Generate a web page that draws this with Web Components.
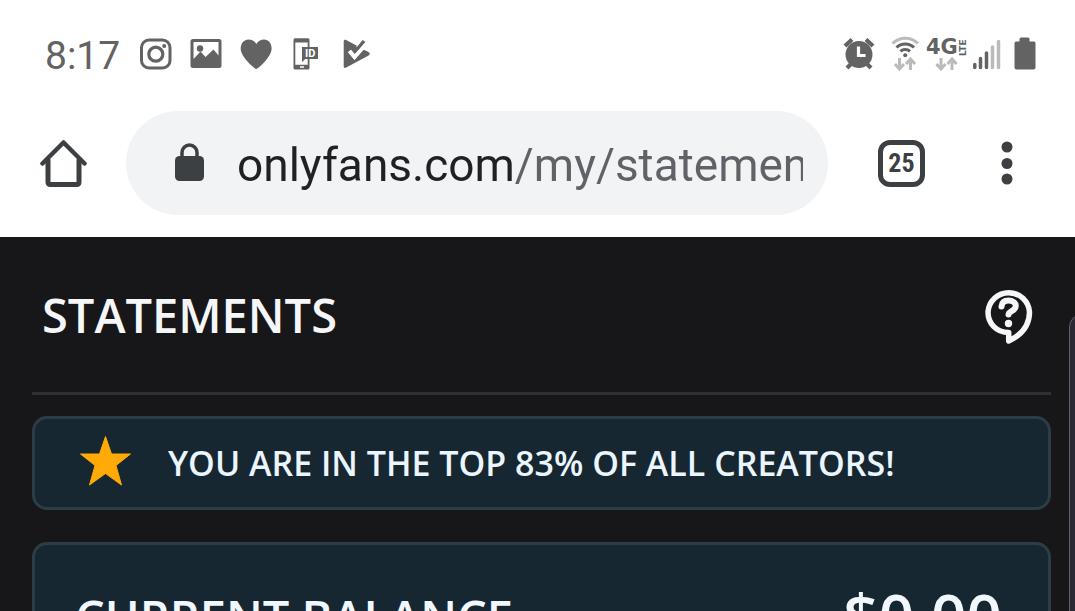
<!DOCTYPE html>
<html lang="en">
<head>
<meta charset="utf-8">
<meta name="viewport" content="width=device-width, initial-scale=1">
<title>Statements</title>
<style>
  html, body { margin: 0; height: 100%; background: #17171a; overflow: hidden; }
  body { font-family: Roboto, "Noto Sans", sans-serif; }
</style>
</head>
<body>
<phone-screen>
  <status-bar slot="chrome">8:17</status-bar>
  <browser-bar slot="chrome" url="onlyfans.com/my/statements" tabs="25"></browser-bar>
  <page-header>STATEMENTS</page-header>
  <rank-banner>YOU ARE IN THE TOP 83% OF ALL CREATORS!</rank-banner>
  <balance-card amount="$0.00">CURRENT BALANCE</balance-card>
</phone-screen>

<script>
const define = (name, html, setup) => {
  const template = document.createElement('template');
  template.innerHTML = html;
  customElements.define(name, class extends HTMLElement {
    constructor() {
      super();
      this.attachShadow({ mode: 'open' }).append(template.content.cloneNode(true));
    }
    connectedCallback() { if (setup) setup(this, this.shadowRoot); }
  });
};

define('phone-screen', `
  <style>
    :host { display: flex; flex-direction: column; height: 100vh; overflow: hidden; position: relative; }
    header { background: #fff; padding-bottom: 22px; }
    main { flex: 1; min-height: 0; padding: 0 24px 0 32px; font-family: "Open Sans", "Noto Sans", sans-serif; color: #f4f6f8; }
    .edge { position: absolute; right: -20px; top: 314px; bottom: -20px; width: 24px; border: 1px solid #626168; border-radius: 14px; background: #2b2a33; }
  </style>
  <header><slot name="chrome"></slot></header>
  <main><slot></slot></main>
  <div class="edge"></div>`);

define('status-bar', `
  <style>
    :host { display: flex; justify-content: space-between; align-items: center; padding: 36px 39px 39px 45px; height: 36px; color: #636363; }
    .group { display: flex; align-items: center; gap: 18px; }
    .system { gap: 8px; }
    time { font-size: 39px; line-height: 36px; padding-top: 4px; font-weight: 400; width: 77px; white-space: nowrap; }
    svg { display: block; height: 36px; fill: currentColor; flex: none; }
  </style>
  <div class="group">
    <time><slot></slot></time>
    <svg width="32" viewBox="0 0 32 36" aria-label="Instagram"><rect x="1.5" y="4" width="28.500" height="28" rx="7.500" fill="none" stroke="currentColor" stroke-width="3"/><circle cx="15.800" cy="18.200" r="7" fill="none" stroke="currentColor" stroke-width="3.200"/><circle cx="24.200" cy="9.900" r="2"/></svg>
    <svg width="32" viewBox="0 0 32 36" aria-label="Picture"><path fill-rule="evenodd" d="M3 3h26a2.500 2.500 0 0 1 2.500 2.500v24A2.500 2.500 0 0 1 29 32H3a2.500 2.500 0 0 1-2.500-2.500v-24A2.500 2.500 0 0 1 3 3zm.5 3v17l7-7.500 5 5.500 8-7.500 5 6V6z"/><circle cx="10" cy="12.500" r="3.200"/></svg>
    <svg width="32" viewBox="0 0 32 36" aria-label="Heart"><path d="M16.300 33C14 32.500 1 21 .7 13 .5 7.500 4 3.500 8.500 3.500c3.500 0 6 1.500 7.800 4.500 1.800-3 4.300-4.500 7.800-4.500 4.500 0 7.700 4 7.500 9.500C31.300 21 18.600 32.500 16.300 33z"/></svg>
    <svg width="32" viewBox="0 0 32 36" aria-label="Mobile ID"><path fill-rule="evenodd" d="M5 2.300h13a1.500 1.500 0 0 1 1.500 1.500V11H28v12h-8.500v9a1.500 1.500 0 0 1-1.500 1.500H5A1.500 1.500 0 0 1 3.500 32V3.800A1.500 1.500 0 0 1 5 2.300zM5.300 6.500v22.300h12.400V23h-2.400l-3.300 3V11h5.700V6.500zM10 30.300v1.400h4v-1.400z"/><text x="15" y="21" font-family="Roboto, sans-serif" font-weight="700" font-size="11" fill="#fff">ID</text></svg>
    <svg width="32" viewBox="0 0 32 36" aria-label="Play store"><path d="M3.700 5.500c0-1.700 1-2.200 2.500-1.500L28 15.700c2.300 1.300 2.500 2.800.2 4L6.200 31.600c-1.500.7-2.500.2-2.500-1.400z"/><path d="M16 11L21 5.500 29 15 24 14z" fill="#fff"/><path d="M9.500 15l5 6L22 12.500" fill="none" stroke="#fff" stroke-width="4"/><path d="M14.500 16.500L24 5" fill="none" stroke="currentColor" stroke-width="3.500"/><path d="M9.500 15l5 6L25.500 9" fill="none" stroke="#fff" stroke-width="3.500"/></svg>
  </div>
  <div class="group system">
    <svg width="40" viewBox="0 0 40 36" aria-label="Alarm"><circle cx="16" cy="18.500" r="13.500"/><path d="M2 10l7-6.500M30 10l-7-6.500M4 32l5-5M28 32l-5-5" stroke="currentColor" stroke-width="4.200"/><path d="M15.500 10.500v9h7" fill="none" stroke="#fff" stroke-width="3.200"/></svg>
    <svg width="28" viewBox="0 0 28 36" aria-label="Wi-Fi"><g fill="none" stroke-width="3"><path d="M1.500 7.500a18 18 0 0 1 25.500 0" stroke="#bbb"/><path d="M5.500 11.500a12.500 12.500 0 0 1 17.500 0M9.500 15.300a7 7 0 0 1 9.500 0" stroke="currentColor"/></g><circle cx="14.200" cy="19.300" r="2"/><path d="M8.500 22v11M4 28l4.500 5 4.500-5M19.500 34V23M15 28l4.500-5 4.500 5" fill="none" stroke="#bbb" stroke-width="3"/></svg>
    <svg width="38" viewBox="0 0 38 36" overflow="visible" aria-label="4G LTE"><text x="-1" y="18" font-family="DejaVu Sans" font-weight="700" font-size="21">4G</text><text transform="translate(39 20) rotate(-90)" font-family="DejaVu Sans" font-weight="700" font-size="9">LTE</text><path d="M14 22v11M9.500 28l4.500 5 4.500-5M25 34V23M20.500 28l4.500-5 4.500 5" fill="none" stroke="#bbb" stroke-width="3"/></svg>
    <svg width="33" viewBox="0 0 33 36" aria-label="Signal"><g fill="none" stroke="currentColor" stroke-width="3.500" stroke-linecap="round"><path d="M1.800 28.500v3M7.500 22.500v9M13.500 17v14.500"/><path d="M19.500 11v20.500M25.500 5.500v26" stroke="#bbb"/></g></svg>
    <svg width="22" viewBox="0 0 22 36" aria-label="Battery"><path d="M5.500 5.500V3q0-1.500 1.500-1.500h7q1.500 0 1.500 1.500v2.500H20q1.500 0 1.500 1.500v24.500Q21.500 33.500 19.500 33.500h-17Q.5 33.500.5 31.500V7Q.5 5.500 2 5.500z"/></svg>
  </div>`);

define('browser-bar', `
  <style>
    :host { display: flex; align-items: center; padding: 0 62px 0 39px; color: #3c4043; }
    button { border: 0; background: none; padding: 0; margin: 0; color: inherit; font: inherit; display: grid; place-items: center; flex: none; }
    svg { display: block; }
    .home { width: 48px; height: 48px; }
    label { flex: 1; min-width: 0; height: 104px; box-sizing: border-box; margin: 0 50px 0 39px; padding: 0 25px 0 48px; border-radius: 52px; background: #f1f3f4; display: flex; align-items: center; gap: 32px; }
    label svg { flex: none; }
    input { flex: 1; min-width: 0; width: 0; height: 64px; border: 0; padding: 4px 0 0; outline: 0; font: 400 46px/64px Roboto, sans-serif; color: #202124;
      background: linear-gradient(90deg, #202124 275px, #5f6368 275px); -webkit-background-clip: text; background-clip: text; -webkit-text-fill-color: transparent; }
    .tabs { width: 47px; height: 47px; box-sizing: border-box; border: 5px solid #3c4043; border-radius: 12px; font-family: "Roboto Condensed", "Liberation Sans Narrow", Roboto, sans-serif; font-size: 26px; font-weight: 700; line-height: 36px; }
    .menu { width: 12px; height: 48px; margin-left: 76px; }
  </style>
  <button class="home" aria-label="Home"><svg width="48" height="48" viewBox="0 0 48 48" fill="none" stroke="currentColor" stroke-width="5" stroke-linecap="round" stroke-linejoin="round"><path d="M3.500 24.500L24.500 3.500l21 21" stroke-width="4.500"/><path d="M9 21v22q0 2.500 2.500 2.500h26q2.500 0 2.500-2.500V21"/></svg></button>
  <label>
    <svg width="31" height="40" viewBox="0 0 31 40" role="img" aria-label="Secure"><rect x="1" y="13" width="29" height="25" rx="4.500" fill="#3c4043"/><path d="M8 14V9.500a7.500 7.500 0 0 1 15 0V14" fill="none" stroke="#3c4043" stroke-width="3.500"/></svg>
    <input type="text" aria-label="Address" spellcheck="false">
  </label>
  <button class="tabs" aria-label="Open tabs"></button>
  <button class="menu" aria-label="More"><svg width="12" height="48" viewBox="0 0 12 48" fill="currentColor"><circle cx="6" cy="8" r="5.500"/><circle cx="6" cy="24.500" r="5.500"/><circle cx="6" cy="40" r="5.500"/></svg></button>`,
  (host, root) => {
    root.querySelector('input').value = host.getAttribute('url');
    root.querySelector('.tabs').textContent = host.getAttribute('tabs');
  });

define('page-header', `
  <style>
    :host { display: flex; justify-content: space-between; align-items: center; height: 155px; padding: 0 18px 0 10px; border-bottom: 3px solid #303033; margin-bottom: 21px; }
    h1 { margin: 0; font-size: 47px; line-height: 64px; font-weight: 600; }
    button { border: 0; padding: 2px 0 0; background: none; color: inherit; }
    svg { display: block; }
  </style>
  <h1><slot></slot></h1>
  <button aria-label="Help"><svg width="49" height="58" viewBox="0 0 49 58" fill="none" stroke="currentColor" stroke-width="5.500" stroke-linecap="round" stroke-linejoin="round"><path d="M24.700 54V45.500C12 45.500 4 36 4 25a20.800 20.800 0 0 1 41.500 0c0 13-8 23-20.800 29z"/><path d="M17.500 19.500c.3-4 3-6 7-6 4.300 0 7.300 2.500 7.300 5.500 0 5-7.300 5-7.300 8.500" stroke-width="6"/><circle cx="24.500" cy="36.500" r="3.700" fill="currentColor" stroke="none"/></svg></button>`);

define('rank-banner', `
  <style>
    :host { display: flex; align-items: center; gap: 36px; box-sizing: border-box; min-height: 94px; padding: 0 44px; border: 3px solid #2c3d47; border-radius: 15px; background: #162731; margin-bottom: 32px; }
    p { margin: 0; font-size: 34px; line-height: 48px; font-weight: 600; color: #eaf5fd; white-space: nowrap; }
    svg { display: block; flex: none; }
  </style>
  <svg width="53" height="56" viewBox="0 0 53 56" aria-hidden="true"><path fill="#ffaa06" stroke="#ffaa06" stroke-linejoin="round" d="M26.500 1.500l6 17.500H51.500L37 30.500 42.500 50 26.500 38.500 10.500 50 16 30.500 1.500 19h19z"/></svg>
  <p><slot></slot></p>`);

define('balance-card', `
  <style>
    :host { display: flex; justify-content: space-between; align-items: flex-start; box-sizing: border-box; min-height: 160px; padding: 40px 46px 40px 40px; border: 3px solid #2c3d47; border-radius: 15px; background: #162731; color: #f0f7fd; }
    h2 { margin: 0; font-size: 47px; line-height: 64px; font-weight: 600; }
    output { font-size: 62px; line-height: 60px; font-weight: 600; }
  </style>
  <h2><slot></slot></h2>
  <output></output>`,
  (host, root) => { root.querySelector('output').textContent = host.getAttribute('amount'); });
</script>
</body>
</html>
